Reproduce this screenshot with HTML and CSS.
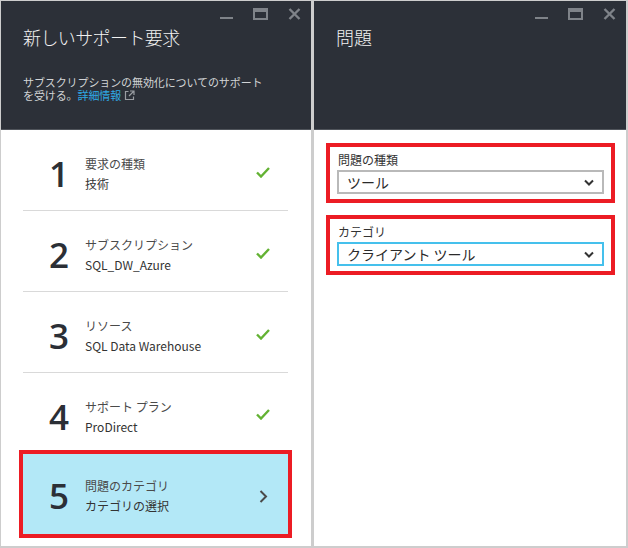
FILE: index.html
```html
<!DOCTYPE html>
<html lang="ja">
<head>
<meta charset="utf-8">
<link rel="stylesheet" href="styles.css">
</head>
<body>
<div class="frame">
  <section class="blade blade-left">
    <header class="blade-head">
      <div class="controls">
        <span class="ctl ctl-min"></span>
        <span class="ctl ctl-max"></span>
        <svg class="ctl-close" width="13" height="12" viewBox="0 0 13 12"><path d="M1.5 1 L11.5 11 M11.5 1 L1.5 11" stroke="#7f8389" stroke-width="2.4" fill="none"/></svg>
      </div>
      <h1 class="title">新しいサポート要求</h1>
      <div class="desc">
        <div class="desc-line">サブスクリプションの無効化についてのサポート</div>
        <div class="desc-line">を受ける。<a class="link" href="#">詳細情報</a><svg class="ext" width="11" height="11" viewBox="0 0 11 11"><path d="M4.5 1.5 H1.5 V9.5 H9.5 V6.5" stroke="#9a9da2" stroke-width="1.2" fill="none"/><path d="M6 1 H10 V5 M10 1 L5 6" stroke="#9a9da2" stroke-width="1.2" fill="none"/></svg></div>
      </div>
    </header>
    <div class="steps">
      <div class="step">
        <span class="num">1</span>
        <div class="txt"><div class="lbl">要求の種類</div><div class="val">技術</div></div>
        <svg class="check" width="14" height="11" viewBox="0 0 14 11"><polyline points="1,5.5 5,9.5 13,1" stroke="#63b233" stroke-width="2.4" fill="none"/></svg>
      </div>
      <div class="step">
        <span class="num">2</span>
        <div class="txt"><div class="lbl">サブスクリプション</div><div class="val">SQL_DW_Azure</div></div>
        <svg class="check" width="14" height="11" viewBox="0 0 14 11"><polyline points="1,5.5 5,9.5 13,1" stroke="#63b233" stroke-width="2.4" fill="none"/></svg>
      </div>
      <div class="step">
        <span class="num">3</span>
        <div class="txt"><div class="lbl">リソース</div><div class="val">SQL Data Warehouse</div></div>
        <svg class="check" width="14" height="11" viewBox="0 0 14 11"><polyline points="1,5.5 5,9.5 13,1" stroke="#63b233" stroke-width="2.4" fill="none"/></svg>
      </div>
      <div class="step">
        <span class="num">4</span>
        <div class="txt"><div class="lbl">サポート プラン</div><div class="val">ProDirect</div></div>
        <svg class="check" width="14" height="11" viewBox="0 0 14 11"><polyline points="1,5.5 5,9.5 13,1" stroke="#63b233" stroke-width="2.4" fill="none"/></svg>
      </div>
      <div class="step step-active">
        <span class="num">5</span>
        <div class="txt"><div class="lbl">問題のカテゴリ</div><div class="val">カテゴリの選択</div></div>
        <svg class="chev" width="9" height="13" viewBox="0 0 9 13"><polyline points="1.5,1 7,6.5 1.5,12" stroke="#4a4a4a" stroke-width="2" fill="none"/></svg>
      </div>
    </div>
  </section>
  <section class="blade blade-right">
    <header class="blade-head">
      <div class="controls">
        <span class="ctl ctl-min"></span>
        <span class="ctl ctl-max"></span>
        <svg class="ctl-close" width="13" height="12" viewBox="0 0 13 12"><path d="M1.5 1 L11.5 11 M11.5 1 L1.5 11" stroke="#7f8389" stroke-width="2.4" fill="none"/></svg>
      </div>
      <h1 class="title">問題</h1>
    </header>
    <div class="form">
      <div class="field">
        <div class="flabel">問題の種類</div>
        <div class="select"><span>ツール</span><svg width="10" height="7" viewBox="0 0 10 7"><polyline points="1,1.5 5,5.5 9,1.5" stroke="#333" stroke-width="2" fill="none"/></svg></div>
      </div>
      <div class="field">
        <div class="flabel">カテゴリ</div>
        <div class="select select-focus"><span>クライアント ツール</span><svg width="10" height="7" viewBox="0 0 10 7"><polyline points="1,1.5 5,5.5 9,1.5" stroke="#333" stroke-width="2" fill="none"/></svg></div>
      </div>
    </div>
  </section>
</div>
</body>
</html>
```
FILE: styles.css
```css
* { box-sizing: border-box; }
html, body { margin: 0; padding: 0; background: #fff; }
body { font-family: "Noto Sans CJK JP", "Noto Sans", sans-serif; }

.frame {
  width: 628px;
  height: 548px;
  background: #cdcdcd;
  padding: 1px 2px 2px 1px;
  display: flex;
  gap: 3px;
}

.blade {
  background: #fff;
  display: flex;
  flex-direction: column;
}
.blade-left { width: 310px; }
.blade-right { width: 312px; }

.blade-head {
  height: 129px;
  background: #2c3038;
  border-bottom: 1px solid #50545b;
  position: relative;
  padding: 0 22px;
}

.controls {
  position: absolute;
  top: 6px;
  right: 10px;
  display: flex;
  align-items: flex-start;
  gap: 20px;
}
.ctl { display: block; }
.ctl-min { width: 13px; height: 2px; background: #7f8389; margin-top: 10px; }
.ctl-max { width: 15px; height: 12px; border: 2px solid #7f8389; border-top-width: 4px; margin-top: 1px; }
.ctl-close { margin-top: 1px; }

.title {
  margin: 0;
  padding-top: 23px;
  font-size: 18px;
  font-weight: 300;
  color: #f2f2f2;
  line-height: 26px;
  letter-spacing: -0.6px;
}
.blade-right .title { font-size: 18px; letter-spacing: 0; }

.desc {
  margin-top: 26px;
  font-size: 11px;
  color: #d2d4d6;
  letter-spacing: -0.1px;
}
.desc-line { height: 13px; line-height: 13px; white-space: nowrap; }
.link { color: #2fa9e6; text-decoration: none; }
.ext { vertical-align: -1px; margin-left: 3px; }

.steps {
  padding: 0 23px 0 22px;
  display: flex;
  flex-direction: column;
}
.step {
  height: 81px;
  border-bottom: 1px solid #d9d9d9;
  display: flex;
  align-items: center;
  padding-top: 8px;
}
.step:nth-child(4) { border-bottom: none; height: 79px; }
.num {
  width: 46px;
  text-align: right;
  font-family: "Open Sans", "Noto Sans", sans-serif;
  font-size: 35px;
  line-height: 36px;
  color: #2b2f36;
  font-weight: 600;
}
.txt { flex: 1; margin-left: 16px; }
.lbl { font-size: 12px; line-height: 20px; color: #4a4a4a; }
.val { font-size: 12px; line-height: 20px; color: #333; }
.check { margin-right: 18px; margin-top: -4px; }
.chev { margin-right: 20px; }

.step-active {
  background: #b3e8f7;
  border-bottom: none;
  outline: 4px solid #ec1c24;
  height: 80px;
  padding-top: 4px;
  margin-top: 2px;
}

.form {
  padding: 13px 11px 0 12px;
  display: flex;
  flex-direction: column;
  gap: 12px;
}
.field {
  border: 4px solid #ec1c24;
  height: 60px;
  padding: 5px 7px 0 7px;
}
.flabel { font-size: 12px; line-height: 16px; color: #333; padding-left: 1px; }
.select {
  margin-top: 2px;
  height: 24px;
  border: 2px solid #b9b9b9;
  display: flex;
  align-items: center;
  justify-content: space-between;
  padding: 0 8px 0 8px;
  font-size: 14px;
  color: #2a2a2a;
}
.select-focus { border-color: #45c0ec; }
```
